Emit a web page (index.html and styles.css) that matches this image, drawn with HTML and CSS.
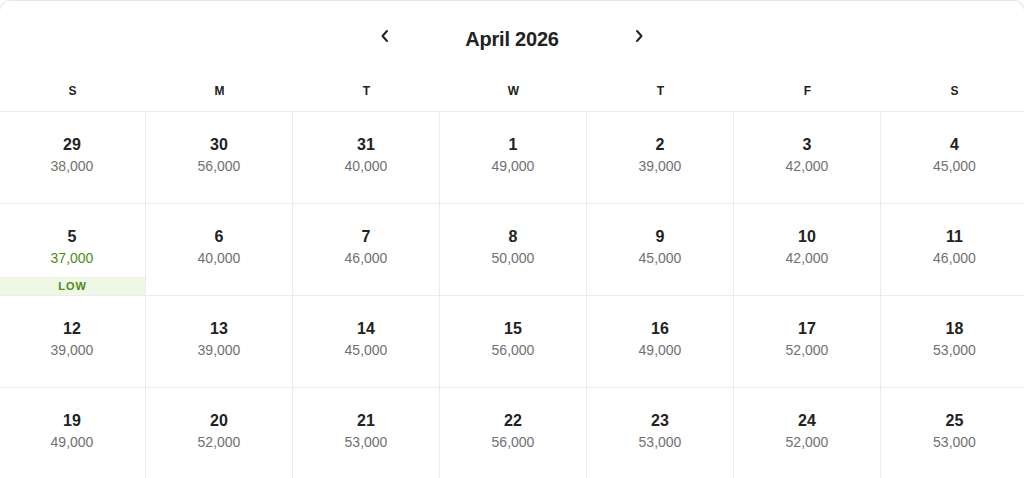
FILE: index.html
```html
<!DOCTYPE html>
<html>
<head>
<meta charset="utf-8">
<link rel="stylesheet" href="styles.css">
</head>
<body>
<div class="card">
  <div class="header">
    <button class="nav" aria-label="Previous month">
      <svg width="10" height="14" viewBox="0 0 10 14"><path d="M7 2 L2.5 7 L7 12" fill="none" stroke="#222" stroke-width="2" stroke-linecap="round" stroke-linejoin="round"/></svg>
    </button>
    <div class="title">April 2026</div>
    <button class="nav" aria-label="Next month">
      <svg width="10" height="14" viewBox="0 0 10 14"><path d="M3 2 L7.5 7 L3 12" fill="none" stroke="#222" stroke-width="2" stroke-linecap="round" stroke-linejoin="round"/></svg>
    </button>
  </div>
  <div class="weekdays">
    <div>S</div><div>M</div><div>T</div><div>W</div><div>T</div><div>F</div><div>S</div>
  </div>
  <div class="grid">
    <div class="cell"><div class="day">29</div><div class="price">38,000</div></div>
    <div class="cell"><div class="day">30</div><div class="price">56,000</div></div>
    <div class="cell"><div class="day">31</div><div class="price">40,000</div></div>
    <div class="cell"><div class="day">1</div><div class="price">49,000</div></div>
    <div class="cell"><div class="day">2</div><div class="price">39,000</div></div>
    <div class="cell"><div class="day">3</div><div class="price">42,000</div></div>
    <div class="cell"><div class="day">4</div><div class="price">45,000</div></div>

    <div class="cell low"><div class="day">5</div><div class="price">37,000</div><div class="badge">LOW</div></div>
    <div class="cell"><div class="day">6</div><div class="price">40,000</div></div>
    <div class="cell"><div class="day">7</div><div class="price">46,000</div></div>
    <div class="cell"><div class="day">8</div><div class="price">50,000</div></div>
    <div class="cell"><div class="day">9</div><div class="price">45,000</div></div>
    <div class="cell"><div class="day">10</div><div class="price">42,000</div></div>
    <div class="cell"><div class="day">11</div><div class="price">46,000</div></div>

    <div class="cell"><div class="day">12</div><div class="price">39,000</div></div>
    <div class="cell"><div class="day">13</div><div class="price">39,000</div></div>
    <div class="cell"><div class="day">14</div><div class="price">45,000</div></div>
    <div class="cell"><div class="day">15</div><div class="price">56,000</div></div>
    <div class="cell"><div class="day">16</div><div class="price">49,000</div></div>
    <div class="cell"><div class="day">17</div><div class="price">52,000</div></div>
    <div class="cell"><div class="day">18</div><div class="price">53,000</div></div>

    <div class="cell"><div class="day">19</div><div class="price">49,000</div></div>
    <div class="cell"><div class="day">20</div><div class="price">52,000</div></div>
    <div class="cell"><div class="day">21</div><div class="price">53,000</div></div>
    <div class="cell"><div class="day">22</div><div class="price">56,000</div></div>
    <div class="cell"><div class="day">23</div><div class="price">53,000</div></div>
    <div class="cell"><div class="day">24</div><div class="price">52,000</div></div>
    <div class="cell"><div class="day">25</div><div class="price">53,000</div></div>
  </div>
</div>
</body>
</html>
```

FILE: styles.css
```css
html, body {
  margin: 0;
  padding: 0;
  background: #fff;
  overflow: hidden;
}
body {
  font-family: "Liberation Sans", Arial, sans-serif;
  color: #222;
}
.card {
  border: 1px solid #e6e6e6;
  border-bottom: none;
  border-radius: 12px 12px 0 0;
  margin: 0 -1px;
  background: #fff;
}
.header {
  display: flex;
  justify-content: center;
  align-items: center;
  height: 70px;
}
.nav {
  border: none;
  background: none;
  padding: 0;
  width: 30px;
  height: 30px;
  display: flex;
  align-items: center;
  justify-content: center;
  margin-top: 0;
}
.title {
  width: 224px;
  text-align: center;
  font-size: 20px;
  font-weight: 700;
  letter-spacing: -0.2px;
  color: #222;
  padding-top: 6px;
}
.weekdays,
.grid {
  display: grid;
  grid-template-columns: repeat(7, 1fr);
  margin-left: -1px;
  margin-right: -4px;
}
.weekdays {
  height: 40px;
  align-items: center;
  font-size: 12px;
  font-weight: 700;
  text-align: center;
  color: #222;
}
.grid {
  grid-auto-rows: 92px;
}
.cell {
  border-top: 1px solid #ececec;
  border-right: 1px solid #ececec;
  display: flex;
  flex-direction: column;
  align-items: center;
  padding-top: 23px;
  box-sizing: border-box;
}
.cell:nth-child(7n) {
  border-right: none;
}
.day {
  font-size: 16px;
  font-weight: 700;
  line-height: 20px;
  color: #222;
}
.price {
  font-size: 14px;
  line-height: 23px;
  color: #717171;
}
.low .price {
  color: #4e8a16;
}
.badge {
  margin-top: auto;
  margin-left: 1px;
  align-self: stretch;
  height: 18px;
  line-height: 18px;
  background: #eef8e4;
  color: #4e8a16;
  font-size: 11px;
  font-weight: 700;
  letter-spacing: 1px;
  text-align: center;
}
```
